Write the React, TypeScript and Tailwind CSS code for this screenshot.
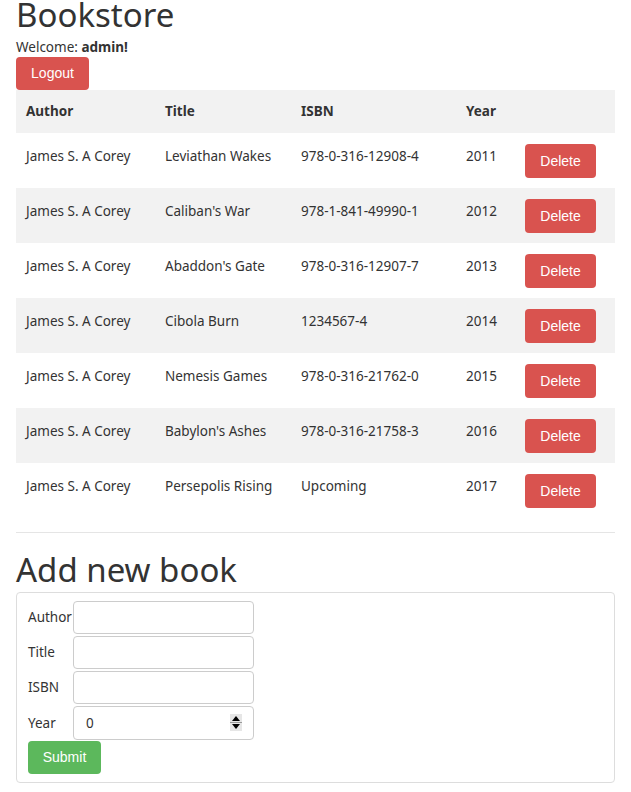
import React, { useState } from 'react';

type Book = { author: string; title: string; isbn: string; year: number };

const initialBooks: Book[] = [
  { author: 'James S. A Corey', title: 'Leviathan Wakes', isbn: '978-0-316-12908-4', year: 2011 },
  { author: 'James S. A Corey', title: "Caliban's War", isbn: '978-1-841-49990-1', year: 2012 },
  { author: 'James S. A Corey', title: "Abaddon's Gate", isbn: '978-0-316-12907-7', year: 2013 },
  { author: 'James S. A Corey', title: 'Cibola Burn', isbn: '1234567-4', year: 2014 },
  { author: 'James S. A Corey', title: 'Nemesis Games', isbn: '978-0-316-21762-0', year: 2015 },
  { author: 'James S. A Corey', title: "Babylon's Ashes", isbn: '978-0-316-21758-3', year: 2016 },
  { author: 'James S. A Corey', title: 'Persepolis Rising', isbn: 'Upcoming', year: 2017 },
];

const fields: { name: 'author' | 'title' | 'isbn'; label: string }[] = [
  { name: 'author', label: 'Author' },
  { name: 'title', label: 'Title' },
  { name: 'isbn', label: 'ISBN' },
];

const App: React.FC = () => {
  const [books, setBooks] = useState<Book[]>(initialBooks);
  const [form, setForm] = useState({ author: '', title: '', isbn: '', year: 0 });

  const handleSubmit = (e: React.FormEvent) => {
    e.preventDefault();
    setBooks(prev => [...prev, { ...form }]);
    setForm({ author: '', title: '', isbn: '', year: 0 });
  };

  return (
    <div className="min-h-screen bg-white px-4 text-[13.5px] text-[#333] font-['Noto_Sans',sans-serif]">
      <h1 className="mt-[-5px] text-[33px] leading-[40px] font-normal">Bookstore</h1>
      <div className="mt-[2px] leading-[20px]">
        Welcome: <b>admin!</b>
      </div>
      <button className="h-[33px] w-[73px] rounded bg-[#d9534f] text-[14px] text-white font-['Liberation_Sans',sans-serif]">
        Logout
      </button>

      <table className="w-full table-fixed border-collapse">
        <colgroup>
          <col className="w-[139px]" />
          <col className="w-[136px]" />
          <col className="w-[165px]" />
          <col className="w-[59px]" />
          <col />
        </colgroup>
        <thead>
          <tr className="h-[43px] bg-[#f2f2f2] text-left">
            <th className="pl-[10px] font-bold">Author</th>
            <th className="pl-[10px] font-bold">Title</th>
            <th className="pl-[10px] font-bold">ISBN</th>
            <th className="pl-[10px] font-bold">Year</th>
            <th></th>
          </tr>
        </thead>
        <tbody>
          {books.map((b, i) => (
            <tr key={i} className={`h-[55px] ${i % 2 === 1 ? 'bg-[#f2f2f2]' : 'bg-white'}`}>
              <td className="pl-[10px] pt-[13px] align-top">{b.author}</td>
              <td className="pl-[10px] pt-[13px] align-top">{b.title}</td>
              <td className="pl-[10px] pt-[13px] align-top">{b.isbn}</td>
              <td className="pl-[10px] pt-[13px] align-top">{b.year}</td>
              <td className="pl-[10px] pt-[11px] align-top">
                <button
                  onClick={() => setBooks(prev => prev.filter((_, j) => j !== i))}
                  className="h-[34px] w-[71px] rounded bg-[#d9534f] text-[14px] text-white font-['Liberation_Sans',sans-serif]"
                >
                  Delete
                </button>
              </td>
            </tr>
          ))}
        </tbody>
      </table>

      <hr className="mt-[14px] border-t border-[#e5e5e5]" />

      <h2 className="mt-[17px] text-[33px] leading-[40px] font-normal">Add new book</h2>

      <form onSubmit={handleSubmit} className="mt-[2px] rounded border border-[#ddd] px-[11px] pt-[8px] pb-[8px]">
        {fields.map(f => (
          <div key={f.name} className="mb-[2px] flex items-center">
            <label className="w-[45px]">{f.label}</label>
            <input
              value={form[f.name]}
              onChange={e => setForm(prev => ({ ...prev, [f.name]: e.target.value }))}
              className="h-[33px] w-[181px] rounded border border-[#ccc] px-3 outline-none"
            />
          </div>
        ))}
        <div className="mb-px flex items-center">
          <label className="w-[45px]">Year</label>
          <div className="relative">
            <input
              type="number"
              value={form.year}
              onChange={e => setForm(prev => ({ ...prev, year: Number(e.target.value) }))}
              className="h-[34px] w-[181px] appearance-none rounded border border-[#ccc] px-3 outline-none [&::-webkit-inner-spin-button]:appearance-none [&::-webkit-outer-spin-button]:appearance-none"
            />
            <div className="pointer-events-none absolute right-[12px] top-[8px] flex h-[17px] w-[12px] flex-col items-center justify-between bg-[#e6e6e6] py-[2px]">
              <span className="h-0 w-0 border-x-[4px] border-b-[5px] border-x-transparent border-b-black" />
              <span className="h-px w-full bg-[#999]" />
              <span className="h-0 w-0 border-x-[4px] border-t-[5px] border-x-transparent border-t-black" />
            </div>
          </div>
        </div>
        <button type="submit" className="h-[33px] w-[73px] rounded bg-[#5cb85c] text-[14px] text-white font-['Liberation_Sans',sans-serif]">
          Submit
        </button>
      </form>
    </div>
  );
};

export default App;
